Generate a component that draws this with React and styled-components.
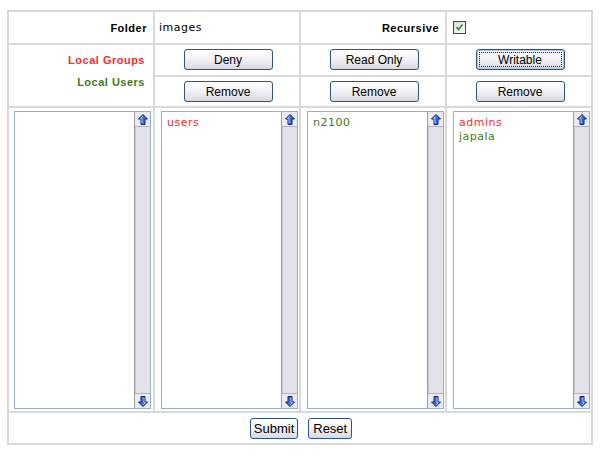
import React from "react";
import styled, { createGlobalStyle, css } from "styled-components";

const GlobalStyle = createGlobalStyle`
  html, body { margin: 0; padding: 0; background: #ffffff; }
  body { font-family: "DejaVu Sans", Verdana, sans-serif; }
  *, *::before, *::after { box-sizing: border-box; }
`;

const LINE = "#d9d9d9";
const RED = "#ff2b2b";
const GREEN = "#3f7a1c";

/* Permission form: 4 columns laid out as a grid of bordered cells */
const PermissionForm = styled.form`
  margin: 10px 0 0 7px;
  width: 586px;
  display: grid;
  grid-template-columns: repeat(4, 1fr);
  grid-template-rows: 33px 32px 31px 305px 32px;
  border: 1px solid ${LINE};
`;

const Cell = styled.div`
  border: 1px solid ${LINE};
  display: flex;
  align-items: center;
  min-width: 0;
`;

const LabelCell = styled(Cell)`
  justify-content: flex-end;
  padding-right: ${(p) => p.$pad ?? 6}px;
`;

const ValueCell = styled(Cell)`
  justify-content: flex-start;
  padding-left: ${(p) => p.$pad ?? 4}px;
`;

const GroupLabelCell = styled(Cell)`
  grid-row: span 2;
  flex-direction: column;
  align-items: flex-end;
  justify-content: flex-start;
  padding: 4px 8px 0 0;
`;

const ButtonCell = styled(Cell)`
  justify-content: center;
  padding-left: 2px;
`;

const ListCell = styled(Cell)`
  align-items: flex-start;
  padding: 3px 1px 0 ${(p) => p.$pad ?? 6}px;
`;

const FooterCell = styled(Cell)`
  grid-column: span 4;
  justify-content: center;
  gap: 10px;
  padding-left: 2px;
`;

const FieldLabel = styled.span`
  font-family: "Liberation Sans", Arial, sans-serif;
  font-weight: bold;
  font-size: 11px;
  letter-spacing: 0.5px;
  line-height: ${(p) => (p.$stacked ? "22px" : "14px")};
  color: ${(p) => p.$color || "#000000"};
  white-space: nowrap;
`;

const FieldValue = styled.span`
  font-size: 11px;
  letter-spacing: 0.5px;
  color: #000000;
`;

const CheckBox = styled.span`
  width: 13px;
  height: 13px;
  margin-left: 1px;
  border: 1px solid #1c5180;
  background: linear-gradient(135deg, #dcdcd7 0%, #ffffff 100%);
  display: inline-flex;
  align-items: center;
  justify-content: center;
`;

const buttonFace = css`
  border: 1px solid #2d5485;
  border-radius: 3px;
  background: linear-gradient(180deg, #ffffff 0%, #f3f3f7 45%, #d9d9e4 100%);
  color: #000000;
  padding: 0;
  cursor: pointer;
  font-family: "Liberation Sans", Arial, sans-serif;
`;

const ActionButton = styled.button`
  ${buttonFace};
  width: 89px;
  height: 21px;
  margin-top: ${(p) => p.$shift ?? 0}px;
  font-size: 12px;
  position: relative;
  ${(p) =>
    p.$focused &&
    css`
      box-shadow: inset 0 0 0 1px #a9c4ee;
      &::after {
        content: "";
        position: absolute;
        inset: 2px;
        border: 1px dotted #202020;
        border-radius: 1px;
      }
    `}
`;

const FormButton = styled.button`
  ${buttonFace};
  height: 21px;
  padding: 0 ${(p) => p.$pad ?? 3}px;
  font-size: 13px;
`;

/* List box with a classic scroll bar */
const ListBox = styled.div`
  width: 137px;
  height: 298px;
  display: flex;
  border: 1px solid #98afcb;
  background: #ffffff;
`;

const Options = styled.div`
  flex: 1;
  padding: 4px 5px;
  display: flex;
  flex-direction: column;
`;

const Option = styled.div`
  font-size: 11px;
  line-height: 14px;
  letter-spacing: 0.5px;
  color: ${(p) => p.$color};
  white-space: nowrap;
`;

const ScrollBar = styled.div`
  width: 16px;
  display: flex;
  flex-direction: column;
  background: #e2e2e8;
  border-left: 1px solid #9d9da3;
  box-shadow: inset 1px 0 0 #c9c9d0;
`;

const ScrollButton = styled.div`
  height: ${(p) => p.$h}px;
  display: flex;
  align-items: center;
  justify-content: center;
  background: #ebebef;
  ${(p) =>
    p.$top
      ? css`border-bottom: 1px solid #b2b2ba;`
      : css`border-top: 1px solid #b2b2ba;`}
`;

const ScrollTrack = styled.div`
  flex: 1;
`;

function Arrow({ down }) {
  return (
    <svg
      width="10"
      height="11"
      viewBox="0 0 10 11"
      style={down ? { transform: "rotate(180deg)" } : undefined}
    >
      <path
        d="M5 0.5 L9.5 5 L7 5 L7 10.5 L3 10.5 L3 5 L0.5 5 Z"
        fill="#3d6fd9"
        stroke="#0d2466"
        strokeWidth="1"
        strokeLinejoin="round"
      />
      <path d="M5 2 L2.5 4.5 L4 4.5 L4 9.5" fill="none" stroke="#9ec0ff" strokeWidth="1" />
    </svg>
  );
}

function Check() {
  return (
    <svg width="9" height="9" viewBox="0 0 9 9">
      <path d="M1.5 4 L3.5 6.5 L7.5 1.5" fill="none" stroke="#21a121" strokeWidth="1.8" />
    </svg>
  );
}

function List({ items }) {
  return (
    <ListBox>
      <Options>
        {items.map((it) => (
          <Option key={it.name} $color={it.group ? RED : GREEN}>
            {it.name}
          </Option>
        ))}
      </Options>
      <ScrollBar>
        <ScrollButton $top $h={15}>
          <Arrow />
        </ScrollButton>
        <ScrollTrack />
        <ScrollButton $h={15}>
          <Arrow down />
        </ScrollButton>
      </ScrollBar>
    </ListBox>
  );
}

const lists = [
  [],
  [{ name: "users", group: true }],
  [{ name: "n2100", group: false }],
  [
    { name: "admins", group: true },
    { name: "japala", group: false },
  ],
];

export default function App() {
  return (
    <>
      <GlobalStyle />
      <PermissionForm onSubmit={(e) => e.preventDefault()}>
        <LabelCell>
          <FieldLabel>Folder</FieldLabel>
        </LabelCell>
        <ValueCell>
          <FieldValue>images</FieldValue>
        </ValueCell>
        <LabelCell>
          <FieldLabel>Recursive</FieldLabel>
        </LabelCell>
        <ValueCell $pad={5}>
          <CheckBox>
            <Check />
          </CheckBox>
        </ValueCell>

        <GroupLabelCell>
          <FieldLabel $stacked $color={RED}>Local Groups</FieldLabel>
          <FieldLabel $stacked $color={GREEN}>Local Users</FieldLabel>
        </GroupLabelCell>
        <ButtonCell>
          <ActionButton type="button" $shift={-1}>Deny</ActionButton>
        </ButtonCell>
        <ButtonCell>
          <ActionButton type="button" $shift={-1}>Read Only</ActionButton>
        </ButtonCell>
        <ButtonCell>
          <ActionButton type="button" $shift={-1} $focused>Writable</ActionButton>
        </ButtonCell>

        <ButtonCell>
          <ActionButton type="button">Remove</ActionButton>
        </ButtonCell>
        <ButtonCell>
          <ActionButton type="button">Remove</ActionButton>
        </ButtonCell>
        <ButtonCell>
          <ActionButton type="button">Remove</ActionButton>
        </ButtonCell>

        {lists.map((items, i) => (
          <ListCell key={i} $pad={i === 0 ? 5 : 6}>
            <List items={items} />
          </ListCell>
        ))}

        <FooterCell>
          <FormButton type="submit" $pad={3}>Submit</FormButton>
          <FormButton type="reset" $pad={4}>Reset</FormButton>
        </FooterCell>
      </PermissionForm>
    </>
  );
}
